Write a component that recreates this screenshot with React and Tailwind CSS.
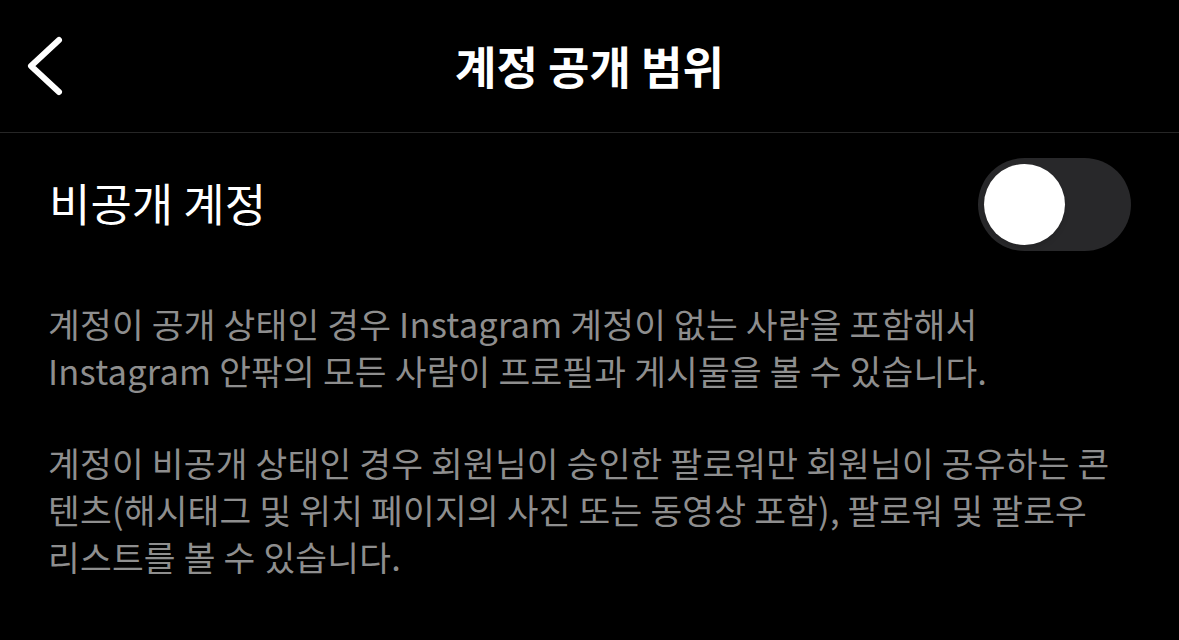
export default function App() {
  const font = { fontFamily: '"Noto Sans CJK KR", "Noto Sans", sans-serif' };
  return (
    <div className="w-[1179px] h-[640px] bg-black overflow-hidden" style={font}>
      <div className="relative h-[133px] border-b border-[#262626] flex items-center justify-center">
        <svg className="absolute left-0 top-0" width="100" height="132" viewBox="0 0 100 132">
          <polyline points="59,40 31,66 59,92" fill="none" stroke="#ffffff" strokeWidth="6" strokeLinecap="round" strokeLinejoin="round" />
        </svg>
        <div className="text-white text-[45px] font-bold leading-none -mt-[2px]">계정 공개 범위</div>
      </div>
      <div className="h-[142px] flex items-center justify-between pl-[49px] pr-[48px]">
        <div className="text-white text-[45px] leading-none -mt-[4px]">비공개 계정</div>
        <div className="w-[153px] h-[93px] rounded-full bg-[#28282a] flex items-center pl-[6px]">
          <div className="w-[81px] h-[81px] rounded-full bg-white shadow-md"></div>
        </div>
      </div>
      <div className="mt-[25px] pl-[48px] pr-[20px] text-[#8e8e8e] text-[34.5px] leading-[47px] tracking-[0.2px] whitespace-nowrap">
        <p>계정이 공개 상태인 경우 Instagram 계정이 없는 사람을 포함해서<br />Instagram 안팎의 모든 사람이 프로필과 게시물을 볼 수 있습니다.</p>
        <p className="mt-[45px]">계정이 비공개 상태인 경우 회원님이 승인한 팔로워만 회원님이 공유하는 콘<br />텐츠(해시태그 및 위치 페이지의 사진 또는 동영상 포함), 팔로워 및 팔로우<br />리스트를 볼 수 있습니다.</p>
      </div>
    </div>
  );
}
